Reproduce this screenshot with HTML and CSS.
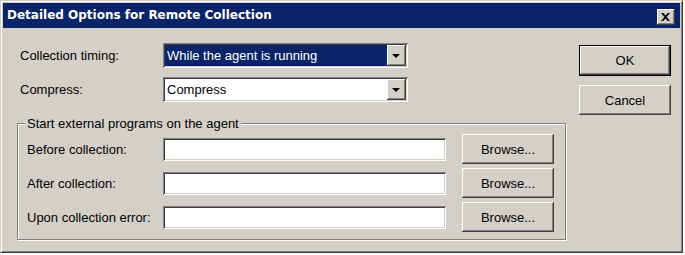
FILE: index.html
```html
<!DOCTYPE html>
<html>
<head>
<meta charset="utf-8">
<link rel="stylesheet" href="styles.css">
</head>
<body>
<div class="window">
  <div class="titlebar">
    <span class="title">Detailed Options for Remote Collection</span>
    <span class="close"><svg width="9" height="8" viewBox="0 0 9 8"><path d="M0 0h2.3l2.2 2.6L6.7 0H9L5.7 4 9 8H6.7L4.5 5.4 2.3 8H0l3.3-4z" fill="#000"/></svg></span>
  </div>
  <div class="content">
    <div class="main">
      <div class="row">
        <span class="lbl">Collection timing:</span>
        <div class="combo"><div class="combo-text sel">While the agent is running</div><div class="drop"><i class="arrow"></i></div></div>
      </div>
      <div class="row row2">
        <span class="lbl">Compress:</span>
        <div class="combo"><div class="combo-text">Compress</div><div class="drop"><i class="arrow"></i></div></div>
      </div>
      <div class="group">
        <span class="legend">Start external programs on the agent</span>
        <div class="grow"><span class="glbl">Before collection:</span><div class="field"></div><button class="btn browse">Browse...</button></div>
        <div class="grow"><span class="glbl">After collection:</span><div class="field"></div><button class="btn browse">Browse...</button></div>
        <div class="grow"><span class="glbl">Upon collection error:</span><div class="field"></div><button class="btn browse">Browse...</button></div>
      </div>
    </div>
    <div class="side">
      <button class="btn default ok">OK</button>
      <button class="btn cancel">Cancel</button>
    </div>
  </div>
</div>
</body>
</html>
```
FILE: styles.css
```css
html, body {
  margin: 0;
  padding: 0;
  background: #ffffff;
}
body {
  font-family: "Liberation Sans", Arial, sans-serif;
  font-size: 13px;
  color: #000;
}
.window {
  box-sizing: border-box;
  width: 683px;
  height: 253px;
  border: 1px solid;
  border-color: #d4d0c8 #404040 #404040 #d4d0c8;
  box-shadow: inset 1px 1px #ffffff, inset -1px -1px #808080;
  padding: 2px;
  background: #d4d0c8;
  display: flex;
  flex-direction: column;
}
.titlebar {
  height: 25px;
  background: #0a246a;
  display: flex;
  align-items: flex-start;
  padding-left: 4px;
}
.title {
  color: #fff;
  font-family: "DejaVu Sans", sans-serif;
  font-weight: bold;
  font-size: 12px;
  line-height: 25px;
}
.close {
  margin-left: auto;
  margin-right: 5px;
  margin-top: 6px;
  width: 18px;
  height: 16px;
  box-sizing: border-box;
  background: #d4d0c8;
  box-shadow: inset -1px -1px #404040, inset 1px 1px #ffffff, inset -2px -2px #808080;
  display: flex;
  align-items: center;
  justify-content: center;
}
.close svg { display: block; margin-left: -1px; margin-top: -1px; }
.content {
  flex: 1;
  display: flex;
}
.main {
  padding-left: 14px;
  padding-top: 15px;
  width: 549px;
}
.row {
  display: flex;
  align-items: center;
  height: 25px;
  margin-left: 3px;
}
.row2 { margin-top: 9px; }
.lbl { width: 143px; }
.combo {
  box-sizing: border-box;
  width: 245px;
  height: 25px;
  padding: 2px;
  background: #fff;
  box-shadow: inset 1px 1px #808080, inset -1px -1px #ffffff, inset 2px 2px #404040, inset -2px -2px #d4d0c8;
  display: flex;
}
.combo-text {
  flex: 1;
  padding-left: 2px;
  line-height: 21px;
}
.combo-text.sel {
  background: #0a246a;
  color: #fff;
}
.drop {
  box-sizing: border-box;
  width: 19px;
  background: #d4d0c8;
  box-shadow: inset -1px -1px #404040, inset 1px 1px #ffffff, inset -2px -2px #808080;
  display: flex;
  align-items: center;
  justify-content: center;
}
.arrow {
  width: 0;
  height: 0;
  border-left: 4px solid transparent;
  border-right: 4px solid transparent;
  border-top: 4px solid #000;
  margin-left: -1px;
}
.group {
  position: relative;
  box-sizing: border-box;
  width: 549px;
  margin-top: 21px;
  border: 1px solid #808080;
  box-shadow: inset 1px 1px #ffffff, 1px 1px #ffffff;
  padding: 10px 11px 7px 9px;
  display: flex;
  flex-direction: column;
  gap: 4px;
}
.legend {
  position: absolute;
  top: -8px;
  left: 7px;
  padding: 0 2px;
  line-height: 15px;
  background: #d4d0c8;
}
.grow {
  display: flex;
  align-items: center;
  height: 30px;
}
.glbl { width: 136px; }
.field {
  box-sizing: border-box;
  width: 283px;
  height: 23px;
  background: #fff;
  box-shadow: inset 1px 1px #808080, inset -1px -1px #ffffff, inset 2px 2px #404040, inset -2px -2px #d4d0c8;
}
.btn {
  box-sizing: border-box;
  font-family: "Liberation Sans", Arial, sans-serif;
  font-size: 13px;
  color: #000;
  background: #d4d0c8;
  border: none;
  padding: 0;
  box-shadow: inset -1px -1px #404040, inset 1px 1px #ffffff, inset -2px -2px #808080;
}
.browse {
  margin-left: 16px;
  width: 92px;
  height: 30px;
}
.side {
  margin-left: 13px;
  padding-top: 17px;
  display: flex;
  flex-direction: column;
}
.ok {
  width: 92px;
  height: 31px;
}
.default {
  border: 1px solid #000;
}
.cancel {
  width: 92px;
  height: 30px;
  margin-top: 9px;
}
```
